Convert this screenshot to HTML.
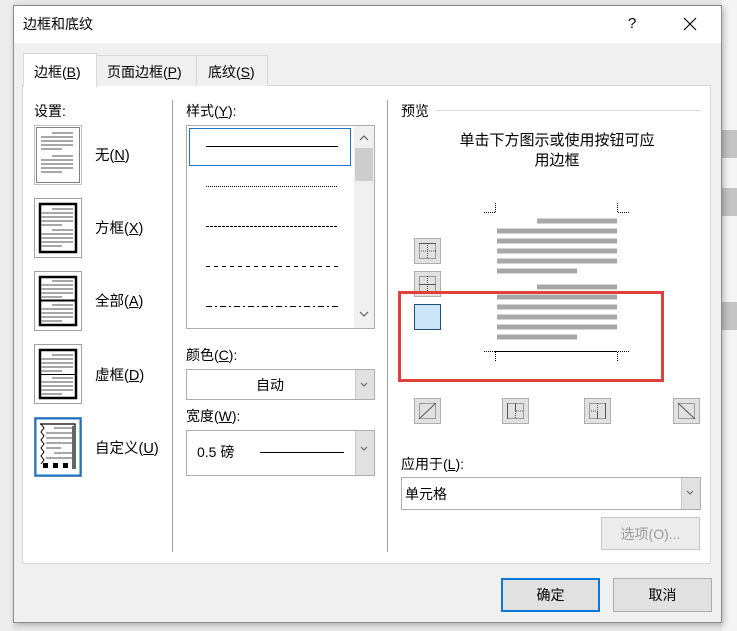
<!DOCTYPE html>
<html><head><meta charset="utf-8"><style>
*{margin:0;padding:0;box-sizing:border-box}
body{width:737px;height:631px;overflow:hidden;background:#e8e8e8;font-family:"Liberation Sans","Noto Sans CJK SC",sans-serif;font-size:14px;color:#000;position:relative}
.a{position:absolute}
.t{position:absolute;white-space:nowrap;line-height:16px}
u{text-decoration:underline}
.dd{position:absolute;background:#fff;border:1px solid #adadad}
.arr{position:absolute;right:0;top:0;bottom:0;width:19px;background:#e1e1e1;border-left:1px solid #c8c8c8}
</style></head><body>
<div class="a" style="left:722px;top:0;width:15px;height:631px;background:#f4f4f4"></div>
<div class="a" style="left:722px;top:130px;width:15px;height:28px;background:#c4c4c4"></div>
<div class="a" style="left:722px;top:188px;width:15px;height:28px;background:#c4c4c4"></div>
<div class="a" style="left:722px;top:302px;width:15px;height:28px;background:#c4c4c4"></div>
<div class="a" style="left:0;top:0;width:13px;height:631px;background:#ececec"></div>
<div class="a" style="left:13px;top:5px;width:709px;height:618px;background:#f0f0f0;border:1px solid #8a8a8a;box-shadow:2px 2px 6px rgba(0,0,0,.25)"></div>
<div class="a" style="left:14px;top:6px;width:707px;height:37px;background:#fff"></div>
<div class="t" style="left:23px;top:16px">边框和底纹</div>
<div class="t" style="left:628px;top:16px;font-size:15px">?</div>
<svg class="a" style="left:683px;top:17px" width="14" height="14"><path d="M1 1L13 13M13 1L1 13" stroke="#000" stroke-width="1.2"/></svg>
<div class="a" style="left:22px;top:85px;width:689px;height:479px;background:#fff;border:1px solid #d9d9d9"></div>
<div class="a" style="left:96px;top:55px;width:101px;height:31px;background:#f0f0f0;border:1px solid #d9d9d9;border-bottom:none"></div>
<div class="a" style="left:197px;top:55px;width:71px;height:31px;background:#f0f0f0;border:1px solid #d9d9d9;border-bottom:none;border-left:none"></div>
<div class="a" style="left:23px;top:53px;width:74px;height:34px;background:#fff;border:1px solid #d9d9d9;border-bottom:none"></div>
<div class="t" style="left:34px;top:64px">边框(<u>B</u>)</div>
<div class="t" style="left:107px;top:64px">页面边框(<u>P</u>)</div>
<div class="t" style="left:208px;top:64px">底纹(<u>S</u>)</div>
<div class="a" style="left:172px;top:100px;width:1px;height:452px;background:#a0a0a0"></div>
<div class="a" style="left:387px;top:100px;width:1px;height:452px;background:#a0a0a0"></div>
<div class="t" style="left:34px;top:103px">设置:</div>
<svg class="a" style="left:33px;top:124px" width="50" height="356">
 <defs>
  <g id="ln" stroke="#a8a8a8" stroke-width="2">
   <path d="M20 0H41M9 4H41M9 8H41M9 12H41M9 16H30"/>
  </g>
 </defs>
 <rect x="1.5" y="1.5" width="47" height="59" fill="#fff" stroke="#c0c0c0"/>
 <rect x="3.5" y="3.5" width="43" height="55" fill="none" stroke="#000" stroke-dasharray="1 1"/>
 <use href="#ln" x="-1" y="9"/><use href="#ln" x="-1" y="32"/>
 <rect x="1.5" y="74.5" width="47" height="59" fill="#fff" stroke="#a0a0a0"/>
 <rect x="7" y="80" width="36" height="48" fill="none" stroke="#000" stroke-width="2.5"/>
 <use href="#ln" x="-1" y="85"/><use href="#ln" x="-1" y="106"/>
 <rect x="1.5" y="147.5" width="47" height="59" fill="#fff" stroke="#a0a0a0"/>
 <rect x="7" y="153" width="36" height="48" fill="none" stroke="#000" stroke-width="2.5"/>
 <path d="M7 176.5H43" stroke="#000" stroke-width="2"/>
 <use href="#ln" x="-1" y="157"/><use href="#ln" x="-1" y="181"/>
 <rect x="1.5" y="220.5" width="47" height="59" fill="#fff" stroke="#a0a0a0"/>
 <rect x="7" y="226" width="36" height="48" fill="none" stroke="#000" stroke-width="2.5"/>
 <path d="M7 250.5H43" stroke="#000" stroke-width="1"/>
 <use href="#ln" x="-1" y="231"/><use href="#ln" x="-1" y="254"/>
 <rect x="1.5" y="293.5" width="47" height="59" fill="#fff" stroke="#a0a0a0"/>
 <rect x="2.5" y="294.5" width="45" height="57" fill="#fff" stroke="#1a73c8" stroke-width="2"/>
 <path d="M7 300H42V345M40 302V345" stroke="#000" stroke-width="1.2" fill="none"/>
 <path d="M8 300l3 4-3 4 3 4-3 4 3 4-3 4 3 4-3 4 3 4-3 4" stroke="#000" fill="none"/>
 <rect x="10" y="339" width="5" height="5"/><rect x="20" y="339" width="5" height="5"/><rect x="30" y="339" width="5" height="5"/>
 <g stroke="#a8a8a8" stroke-width="2"><path d="M21 304H39M13 309H39M13 314H39M13 319H39M13 324H28M21 329H39M13 334H39"/></g>
</svg>
<div class="t" style="left:95px;top:148px;font-size:14.5px">无(<u>N</u>)</div>
<div class="t" style="left:95px;top:221px;font-size:14.5px">方框(<u>X</u>)</div>
<div class="t" style="left:95px;top:294px;font-size:14.5px">全部(<u>A</u>)</div>
<div class="t" style="left:95px;top:368px;font-size:14.5px">虚框(<u>D</u>)</div>
<div class="t" style="left:95px;top:441px;font-size:14.5px">自定义(<u>U</u>)</div>
<div class="t" style="left:186px;top:103px">样式(<u>Y</u>):</div>
<div class="dd" style="left:186px;top:125px;width:189px;height:204px"></div>
<div class="a" style="left:354px;top:126px;width:20px;height:202px;background:#f0f0f0"></div>
<div class="a" style="left:355px;top:148px;width:18px;height:33px;background:#cdcdcd"></div>
<svg class="a" style="left:356px;top:131px" width="16" height="190"><path d="M4 9L8 5L12 9M4 181L8 185L12 181" stroke="#606060" fill="none" stroke-width="1.2"/></svg>
<div class="a" style="left:189px;top:128px;width:162px;height:38px;border:1px solid #1a73c8"></div>
<svg class="a" style="left:200px;top:140px" width="142" height="170">
 <path d="M6 6.5H138" stroke="#000"/>
 <path d="M6 46.5H138" stroke="#000" stroke-dasharray="1 1"/>
 <path d="M6 86.5H138" stroke="#000" stroke-dasharray="3 1"/>
 <path d="M6 126.5H138" stroke="#000" stroke-dasharray="4 4"/>
 <path d="M6 166.5H138" stroke="#000" stroke-dasharray="6 3 2 3"/>
</svg>
<div class="t" style="left:186px;top:347px">颜色(<u>C</u>):</div>
<div class="dd" style="left:186px;top:369px;width:189px;height:31px"><div class="arr"></div></div>
<div class="t" style="left:256px;top:377px">自动</div>
<div class="t" style="left:186px;top:408px">宽度(<u>W</u>):</div>
<div class="dd" style="left:186px;top:430px;width:189px;height:46px"><div class="arr"></div></div>
<div class="t" style="left:197px;top:444px">0.5 磅</div>
<div class="a" style="left:260px;top:452px;width:84px;height:1px;background:#000"></div>
<svg class="a" style="left:356px;top:375px" width="16" height="90"><path d="M5 8L8 11L11 8M5 72L8 75L11 72" stroke="#606060" fill="none"/></svg>
<div class="t" style="left:401px;top:103px">预览</div>
<div class="a" style="left:436px;top:110px;width:265px;height:1px;background:#d9d9d9"></div>
<div class="t" style="left:420px;top:132px;width:274px;text-align:center;font-size:15px;line-height:17px">单击下方图示或使用按钮可应</div>
<div class="t" style="left:420px;top:152px;width:274px;text-align:center;font-size:15px;line-height:17px">用边框</div>
<svg class="a" style="left:390px;top:195px" width="320" height="235">
 <g stroke="#000" stroke-dasharray="1 1" fill="none">
  <path d="M94 17.5H105.5V8M227.5 8V17.5H239M94 156.5H105.5V166M227.5 166V156.5H239"/>
 </g>
 <path d="M105 156.5H227" stroke="#000"/>
 <g stroke="#a8a8a8" stroke-width="5">
  <path d="M147 26H227M107 36H227M107 46H227M107 56H227M107 66H227M107 76H187"/>
  <path d="M147 92H227M107 102H227M107 112H227M107 122H227M107 132H227M107 142H187"/>
 </g>
 <g fill="#e1e1e1" stroke="#adadad">
  <rect x="24.5" y="43.5" width="26" height="25"/><rect x="24.5" y="76.5" width="26" height="25"/>
  <rect x="24.5" y="203.5" width="26" height="25"/><rect x="112.5" y="203.5" width="26" height="25"/>
  <rect x="194.5" y="203.5" width="26" height="25"/><rect x="283.5" y="203.5" width="26" height="25"/>
 </g>
 <rect x="24.5" y="109.5" width="26" height="25" fill="#cce4f7" stroke="#1f4e79"/>
 <g stroke="#555" fill="none" stroke-dasharray="1 1">
  <rect x="29.5" y="48.5" width="16" height="15"/><path d="M29 56H46M37.5 48V64"/>
  <rect x="29.5" y="81.5" width="16" height="15"/><path d="M37.5 81V97"/>
  <rect x="29.5" y="208.5" width="16" height="15"/>
  <rect x="117.5" y="208.5" width="16" height="15"/><path d="M126 216H134M125.5 216V224"/>
  <rect x="199.5" y="208.5" width="16" height="15"/><path d="M207.5 208V216M199 216H207"/>
  <rect x="288.5" y="208.5" width="16" height="15"/>
 </g>
 <g stroke="#555" fill="none">
  <path d="M29 48.5H46M29 89.5H46M29 224L46 208M117.5 208V224M125.5 208V216M207.5 216V224M215.5 208V224M288 208L305 224"/>
 </g>
</svg>
<div class="a" style="left:398px;top:291px;width:266px;height:91px;border:3px solid #e04040"></div>
<div class="t" style="left:401px;top:456px">应用于(<u>L</u>):</div>
<div class="dd" style="left:401px;top:477px;width:300px;height:33px"><div class="arr"></div></div>
<svg class="a" style="left:682px;top:488px" width="16" height="12"><path d="M5 3L8 6L11 3" stroke="#606060" fill="none"/></svg>
<div class="t" style="left:405px;top:486px">单元格</div>
<div class="a" style="left:601px;top:517px;width:99px;height:33px;background:#ececec;border:1px solid #c8c8c8"></div>
<div class="t" style="left:601px;top:526px;width:99px;text-align:center;color:#9a9a9a">选项(O)...</div>
<div class="a" style="left:501px;top:578px;width:99px;height:34px;background:#e1e1e1;border:2px solid #0a78d7"></div>
<div class="t" style="left:501px;top:587px;width:99px;text-align:center">确定</div>
<div class="a" style="left:613px;top:578px;width:99px;height:34px;background:#e1e1e1;border:1px solid #adadad"></div>
<div class="t" style="left:613px;top:587px;width:99px;text-align:center">取消</div>
</body></html>
